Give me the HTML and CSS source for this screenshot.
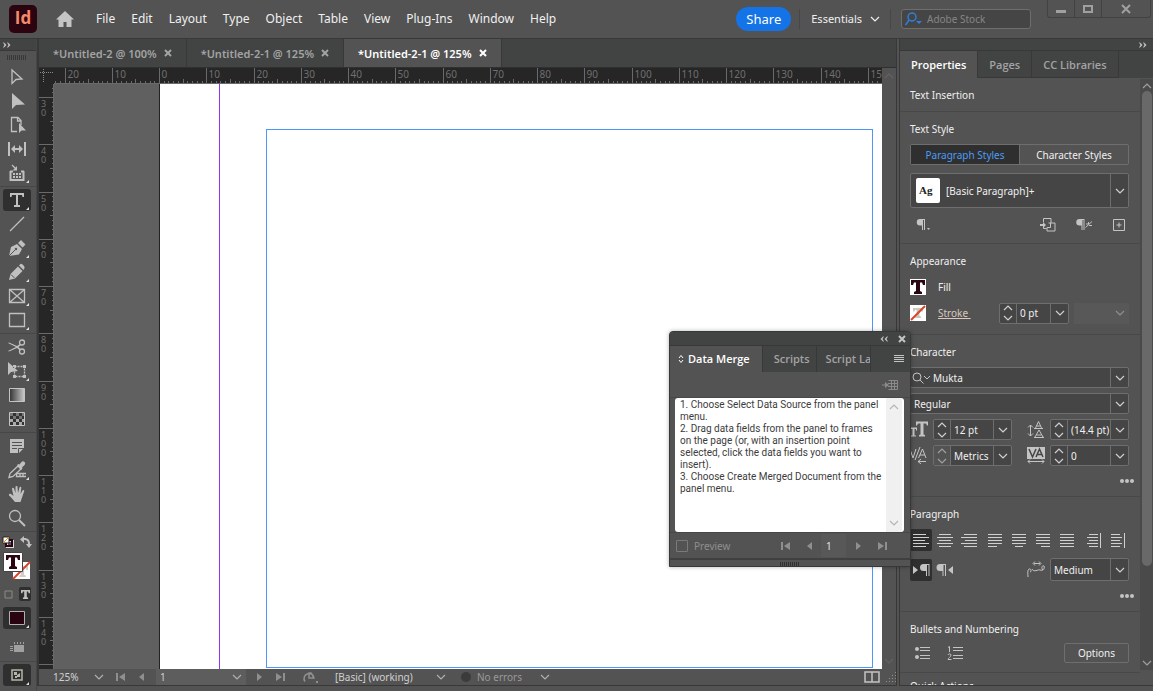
FILE: index.html
```html
<!DOCTYPE html>
<html lang="en">
<head>
    <meta charset="UTF-8">
    <meta name="viewport" content="width=device-width, initial-scale=1.0">
    <title>Untitled-2-1</title>
    <link rel="stylesheet" href="styles.css">
</head>
<body>
    <!-- shared icons -->
    <svg class="defs" aria-hidden="true">
        <symbol id="chev" viewBox="0 0 10 10"><path d="M1 3l4 4 4-4" fill="none" stroke="currentColor" stroke-width="1.200"/></symbol>
        <symbol id="updown" viewBox="0 0 10 18"><path d="M1 6l4-4 4 4M1 12l4 4 4-4" fill="none" stroke="currentColor" stroke-width="1.200"/></symbol>
        <symbol id="cross" viewBox="0 0 8 8"><path d="M1 1l6 6M7 1l-6 6" stroke="currentColor" stroke-width="2"/></symbol>
        <symbol id="more" viewBox="0 0 14 4"><circle cx="2" cy="2" r="2"/><circle cx="7" cy="2" r="2"/><circle cx="12" cy="2" r="2"/></symbol>
        <symbol id="dbl" viewBox="0 0 8 6"><path d="M0 .5h1L3.500 3 1 5.500H0L1.500 3zM4 .5h1L7.500 3 5 5.500H4L5.500 3z"/></symbol>
        <symbol id="first" viewBox="0 0 9 8"><path d="M0 0h2v8H0zM9 0v8L3 4z"/></symbol>
        <symbol id="prev" viewBox="0 0 9 8"><path d="M7 0v8L2 4z"/></symbol>
        <symbol id="next" viewBox="0 0 9 8"><path d="M2 0v8l5-4z"/></symbol>
        <symbol id="last" viewBox="0 0 9 8"><path d="M7 0h2v8H7zM0 0v8l6-4z"/></symbol>
        <symbol id="serif-t" viewBox="0 0 14 14"><path d="M0 0h14v5h-2L11 2.500H9V11l2 1v2H3v-2l2-1V2.500H3L2 5H0z"/></symbol>
    </svg>

    <header class="menubar">
        <div class="logo">Id</div>
        <button class="home" aria-label="Home"><svg viewBox="0 0 18 16"><path d="M9 0l9 8.500h-2.500V16h-5v-5h-3v5h-5V8.500H0z"/></svg></button>
        <nav class="menu">
            <a href="#">File</a>
            <a href="#">Edit</a>
            <a href="#">Layout</a>
            <a href="#">Type</a>
            <a href="#">Object</a>
            <a href="#">Table</a>
            <a href="#">View</a>
            <a href="#">Plug-Ins</a>
            <a href="#">Window</a>
            <a href="#">Help</a>
        </nav>
        <button class="share">Share</button>
        <button class="workspace">Essentials <svg><use href="#chev"/></svg></button>
        <label class="stock">
            <svg viewBox="0 0 18 14"><circle cx="7" cy="5" r="4" fill="none" stroke="#2f7fe0" stroke-width="1.500"/><path d="M4 8l-3.500 5" stroke="#2f7fe0" stroke-width="1.500"/><path d="M11 9h6l-3 3z" fill="#2f7fe0"/></svg>
            <input type="text" placeholder="Adobe Stock" aria-label="Adobe Stock">
        </label>
        <div class="window-buttons">
            <button aria-label="Minimize"><svg viewBox="0 0 10 10"><path d="M0 6h10v3H0z"/></svg></button>
            <button aria-label="Maximize"><svg viewBox="0 0 10 10"><path d="M1 2h8v6H1z" fill="none" stroke="currentColor" stroke-width="2"/></svg></button>
            <button aria-label="Close" class="wide"><svg viewBox="0 0 10 10"><path d="M1 1l8 8M9 1l-8 8" stroke="currentColor" stroke-width="2"/></svg></button>
        </div>
    </header>

    <main class="workarea">
        <aside class="tools">
            <div class="dock-head left"><svg><use href="#dbl"/></svg></div>
            <div class="grip"></div>
            <div class="tool-group">
                <button class="tool" aria-label="Selection"><svg viewBox="0 0 18 18"><path d="M4 2v13.500l4-4 6-.5z" class="line"/></svg></button>
                <button class="tool" aria-label="Direct Selection"><svg viewBox="0 0 18 18"><path d="M4 1v16l4-4 9-.5z"/></svg></button>
                <button class="tool" aria-label="Page"><svg viewBox="0 0 18 18"><path d="M9 15.500H3.500v-14H10l3 3V9M9.500 1.500v3.500H13" class="line"/><path d="M11 7v10l2.500-2.500H18z"/></svg></button>
                <button class="tool" aria-label="Gap"><svg viewBox="0 0 18 18"><path d="M1 2v14M17 2v14M4 9h10" class="line thick"/><path d="M3 9l4-4v8zM15 9l-4-4v8z"/></svg></button>
                <button class="tool more" aria-label="Content Collector"><svg viewBox="0 0 18 18"><path d="M2.500 7v9h13V7M2 7.500h3M13 7.500h3" class="line thick"/><path d="M4 1l4 4" class="line"/><path d="M9 2v4.500H4.500zM5 9h2v2H5zM8 9h2v2H8zM11 9h2v2h-2zM5 12h2v2H5zM8 12h2v2H8zM11 12h2v2h-2z"/></svg></button>
            </div>
            <div class="tool-group">
                <button class="tool more on" aria-label="Type"><svg viewBox="-2 -2 18 18"><path d="M0 0h14v4h-1.500L12 2H8v10h2v2H4v-2h2V2H2l-.5 2H0z"/></svg></button>
                <button class="tool" aria-label="Line"><svg viewBox="0 0 18 18"><path d="M2 16L16 2" class="line"/></svg></button>
                <button class="tool more" aria-label="Pen"><svg viewBox="0 0 18 18"><path d="M1 17l2-9 6-3 5 5-3 5.500zM10 4l3-3 4.500 4.500-3 3z"/><path d="M1 17l6-6" stroke="#535353"/><circle cx="8" cy="10" r="1.200" fill="#535353"/></svg></button>
                <button class="tool more" aria-label="Pencil"><svg viewBox="0 0 18 18"><path d="M1 17l1.500-6L10 3.500 14.500 8 7 15.500zM11 2.500l1.500-1.500c1-1 5 3 4 4L15.500 7z"/><path d="M3 11.500l3.500 3.500" stroke="#535353"/></svg></button>
                <button class="tool more" aria-label="Rectangle Frame"><svg viewBox="0 0 18 18"><path d="M1.500 2.500h15v13h-15zl15 13M16.500 2.500l-15 13" class="line"/></svg></button>
                <button class="tool more" aria-label="Rectangle"><svg viewBox="0 0 18 18"><path d="M1.500 2.500h15v13h-15z" class="line"/></svg></button>
            </div>
            <div class="tool-group">
                <button class="tool" aria-label="Scissors"><svg viewBox="0 0 18 18"><circle cx="14" cy="4.500" r="2.500" class="line"/><circle cx="14" cy="13.500" r="2.500" class="line"/><path d="M12 6L9 8 1 4.500 0 5l8 4-8 4 1 .5L9 10l3 2.500 1-1L10.500 9 13 7z"/></svg></button>
                <button class="tool more" aria-label="Free Transform"><svg viewBox="0 0 18 18"><path d="M6.500 4.500h10v10h-10z" class="line" stroke-dasharray="2 1"/><path d="M0 0v13l3-3 7-1zM5 3h3v3H5zM15 3h3v3h-3zM15 13h3v3h-3zM5 13h3v3H5z"/></svg></button>
                <button class="tool" aria-label="Gradient"><svg viewBox="0 0 18 18"><linearGradient id="g"><stop stop-color="#333"/><stop offset="1" stop-color="#ccc"/></linearGradient><path d="M1.500 2.500h15v13h-15z" fill="url(#g)" stroke="#c4c4c4"/></svg></button>
                <button class="tool" aria-label="Gradient Feather"><svg viewBox="0 0 18 18"><path d="M1.500 2.500h15v13h-15z" fill="#333" stroke="#c4c4c4"/><path d="M2 3h3v3H2zM8 3h3v3H8zM14 3h2v3h-2zM5 6h3v3H5zM11 6h3v3h-3z" fill="#777"/><path d="M2 9h3v3H2zM8 9h3v3H8zM14 9h2v3h-2zM5 12h3v3H5zM11 12h3v3h-3z" fill="#aaa"/></svg></button>
            </div>
            <div class="tool-group">
                <button class="tool" aria-label="Note"><svg viewBox="0 0 18 18"><path d="M2 2h14v9l-5 5H2z"/><path d="M4 5.500h10M4 8.500h10M4 11.500h5M10.500 16v-4.500H16" fill="none" stroke="#535353"/></svg></button>
                <button class="tool more" aria-label="Color Theme"><svg viewBox="0 0 18 18"><path d="M1 16.500l1-4L10 5l3 3-8 7.500z" class="line"/><path d="M9 4l1.500-1 1 .5 2-2.500c2-2 5 1 3 3L14 6.500l.5 1-1.500 1.500z"/><path d="M8.500 12.500h10v3h-10zM12 12.500v3M15 12.500v3" class="line"/></svg></button>
                <button class="tool" aria-label="Hand"><svg viewBox="0 0 18 18"><path d="M7 17c-2-2-4-5-6-6.500-.5-1.500 1-2 2-1.500l2.500 2L4 4c0-1.500 1.500-1.500 2-.5L7.500 8V2c0-1.500 2-1.500 2 0l.5 6 1.500-5.500c.5-1.200 2-.8 1.800.5L12.500 9l2-3.500c.8-1 2-.5 1.700.7L13.500 14l-1 3z"/></svg></button>
                <button class="tool" aria-label="Zoom"><svg viewBox="0 0 18 18"><circle cx="7" cy="7" r="5.500" class="line"/><path d="M11 11l6 6" class="line thick"/></svg></button>
            </div>
            <div class="swatches">
                <div class="swap">
                    <svg viewBox="0 0 12 12"><path d="M5 5h6v6H5z" fill="none" stroke="#ddd" stroke-width="2"/><path d="M4 4h6v6H4z" fill="none" stroke="#2a0411" stroke-width="2"/><path d="M1 1h6v6H1z" fill="#fff" stroke="#222"/><path d="M1 7l6-6" stroke="#e8871e"/></svg>
                    <svg viewBox="0 0 12 12"><path d="M0 3.500L4 0v2c4 0 6 2 6 6h2l-3 4-3-4h2c0-3-1-4-4-4v3z"/></svg>
                </div>
                <svg class="fillstroke" viewBox="0 0 28 28">
                    <path d="M10 10h17v17H10z" fill="#fff"/>
                    <use href="#serif-t" x="14" y="14" width="11" height="11" fill="#cfcfc8"/>
                    <path d="M10 27l17-17" stroke="#d8442a" stroke-width="2"/>
                    <path d="M.5 .5h19v19H.5z" fill="#fff" stroke="#444"/>
                    <use href="#serif-t" x="3" y="3" width="14" height="14" fill="#2a0411"/>
                </svg>
                <div class="affects">
                    <button aria-label="Formatting affects container"><svg viewBox="0 0 9 9"><path d="M1 1h7v7H1z" fill="none" stroke="#8d8d80"/></svg></button>
                    <button class="on" aria-label="Formatting affects text"><svg viewBox="0 0 14 14"><use href="#serif-t"/></svg></button>
                </div>
                <button class="tool more on" aria-label="Apply Color"><svg viewBox="0 0 18 18"><path d="M1.500 2.500h15v13h-15z" fill="#2a0411" stroke="#b0b0b0"/></svg></button>
                <button class="tool view" aria-label="View Options"><svg viewBox="0 0 18 18"><path d="M6 7h10v7H6zM6 4h1v2H6zM9 4h1v2H9zM12 4h1v2h-1zM15 4h1v2h-1zM2 8h3v1H2zM2 10h3v1H2zM2 12h3v1H2z" fill="#a0a0a0"/></svg></button>
            </div>
            <div class="tool-group last">
                <button class="tool more on" aria-label="Screen Mode"><svg viewBox="0 0 18 18"><path d="M4 4h10v10H4z" fill="none" stroke="#b5b5a8" stroke-width="1.500"/><path d="M6 6h3v3H6zM9 9l3-2v4H9zM7 10h2v2H7z" fill="#b5b5a8"/></svg></button>
            </div>
        </aside>

        <section class="document">
            <div class="doc-tabs">
                <div class="doc-tab"><a href="#">*Untitled-2 @ 100%</a><button aria-label="Close tab"><svg><use href="#cross"/></svg></button></div>
                <div class="doc-tab"><a href="#">*Untitled-2-1 @ 125%</a><button aria-label="Close tab"><svg><use href="#cross"/></svg></button></div>
                <div class="doc-tab active"><a href="#">*Untitled-2-1 @ 125%</a><button aria-label="Close tab"><svg><use href="#cross"/></svg></button></div>
            </div>
            <div class="doc-grid">
                <svg class="corner" viewBox="0 0 15 16"><path d="M1 4.500h13M4.500 1v14" stroke="#8a8a8a" stroke-dasharray="1 1"/></svg>
                <svg class="ruler" id="ruler-x"></svg>
                <svg class="ruler" id="ruler-y"></svg>
                <div class="canvas">
                    <div class="pasteboard"></div>
                    <div class="guide"></div>
                    <div class="page"><div class="frame"></div></div>
                </div>
                <div class="doc-scroll"><svg class="up"><use href="#chev"/></svg><svg><use href="#chev"/></svg></div>
            </div>
            <footer class="status">
                <div class="status-field zoom"><select aria-label="Zoom level"><option>125%</option></select><svg><use href="#chev"/></svg></div>
                <button aria-label="First page"><svg><use href="#first"/></svg></button>
                <button aria-label="Previous page"><svg><use href="#prev"/></svg></button>
                <div class="status-field page-no"><select aria-label="Page"><option>1</option></select><svg><use href="#chev"/></svg></div>
                <button aria-label="Next page"><svg><use href="#next"/></svg></button>
                <button aria-label="Last page"><svg><use href="#last"/></svg></button>
                <button class="open" aria-label="Open"><svg viewBox="0 0 16 12"><path d="M3 10.500A5 5 0 1 1 12 8M7 2v5h4V4.500L9 2z" fill="none" stroke="currentColor" stroke-width="1.500"/><path d="M14 10h2v2h-2z"/></svg></button>
                <div class="status-field preset"><select aria-label="Preflight profile"><option>[Basic] (working)</option></select><svg><use href="#chev"/></svg></div>
                <i class="dot"></i>
                <div class="status-field errors"><select aria-label="Preflight"><option>No errors</option></select><svg><use href="#chev"/></svg></div>
                <button class="split" aria-label="Split view"><svg viewBox="0 0 16 12"><path d="M1 1h14v10H1zM8 1v10" fill="none" stroke="#c4c4c4" stroke-width="1.500"/></svg></button>
                <svg class="resize" viewBox="0 0 10 10"><path d="M9 0h1v1H9zM6 3h1v1H6zM9 3h1v1H9zM3 6h1v1H3zM6 6h1v1H6zM9 6h1v1H9zM0 9h1v1H0zM3 9h1v1H3zM6 9h1v1H6zM9 9h1v1H9z"/></svg>
            </footer>
        </section>

        <aside class="panel">
            <div class="dock-head right"><svg><use href="#dbl"/></svg></div>
            <div class="panel-tabs">
                <a href="#" class="active">Properties</a>
                <a href="#">Pages</a>
                <a href="#">CC Libraries</a>
            </div>
            <div class="panel-body">
                <div class="sections">
                    <section class="block">
                        <h2>Text Insertion</h2>
                    </section>
                    <section class="block">
                        <h2>Text Style</h2>
                        <div class="segmented"><button class="on">Paragraph Styles</button><button>Character Styles</button></div>
                        <div class="combo style-pick">
                            <span class="ag">Ag</span>
                            <select aria-label="Paragraph style"><option>[Basic Paragraph]+</option></select>
                            <span class="drop"><svg><use href="#chev"/></svg></span>
                        </div>
                        <div class="style-icons">
                            <button aria-label="Paragraph options"><svg viewBox="0 0 16 14"><path d="M4 1h5v11H8V2H7v10H6V7.500H4A3.200 3.200 0 014 1zM11 10h3l-1.500 2z"/></svg></button>
                            <span class="spacer"></span>
                            <button aria-label="Redefine style"><svg viewBox="0 0 16 14"><path d="M3.500 4V.5H11V5M3.500 9v1.500h3M8.500 5h6.500v8H7V9.500h3.500V5" class="line"/><path d="M0 6h3V4l3 3-3 3V8H0z"/></svg></button>
                            <button aria-label="Clear overrides"><svg viewBox="0 0 16 14"><path d="M3.500 1h5v11h-1V2h-1v10h-1V7.500h-2a3.200 3.200 0 010-6.500z"/><path d="M9.500 9.500L16 3.500M10 6h2.500M13 7.500h3M12.500 4v2" class="line"/></svg></button>
                            <button aria-label="Create style"><svg viewBox="0 0 14 14"><path d="M1.500 1.500h11v11h-11zM7 4.500v5M4.500 7h5" class="line"/></svg></button>
                        </div>
                    </section>
                    <section class="block appearance">
                        <h2>Appearance</h2>
                        <div class="row fill-row">
                            <svg class="chip" viewBox="0 0 16 16"><path d="M0 0h16v16H0z" fill="#fff"/><use href="#serif-t" x="1" y="1" width="14" height="14" fill="#2a0411"/></svg>
                            <span class="name">Fill</span>
                        </div>
                        <div class="row stroke-row">
                            <svg class="chip" viewBox="0 0 16 16"><path d="M0 0h16v16H0z" fill="#fff"/><use href="#serif-t" x="3" y="3" width="10" height="10" fill="#c5c8bd"/><path d="M1 15L15 1" stroke="#d8442a" stroke-width="2"/></svg>
                            <label class="name" for="stroke"><a href="#">Stroke&nbsp;</a></label>
                            <div class="combo stroke-size">
                                <button class="step" aria-label="Step"><svg><use href="#updown"/></svg></button>
                                <input type="text" id="stroke" value="0 pt">
                                <button class="drop" aria-label="List"><svg><use href="#chev"/></svg></button>
                            </div>
                            <div class="stroke-type"><svg><use href="#chev"/></svg></div>
                        </div>
                    </section>
                    <section class="block">
                        <h2>Character</h2>
                        <div class="combo font">
                            <svg class="find" viewBox="0 0 18 12"><circle cx="5" cy="5" r="4" class="line"/><path d="M8 8l3.500 3.500M12 4l3 3 3-3" class="line"/></svg>
                            <input type="text" value="Mukta" aria-label="Font">
                            <button class="drop" aria-label="List"><svg><use href="#chev"/></svg></button>
                        </div>
                        <div class="combo">
                            <select aria-label="Font style"><option>Regular</option></select>
                            <span class="drop"><svg><use href="#chev"/></svg></span>
                        </div>
                        <div class="char-grid">
                            <svg class="glyph" viewBox="0 0 18 16"><path d="M6 0h12v4h-1l-1-2h-2.500v11l1.500.5V15H9v-1.500l1.500-.5V2H8L7 4H6zM0 6h7v3H6V7.500H4.500V14H6v1H1v-1h1.500V7.500H1V9H0z"/></svg>
                            <div class="combo">
                                <button class="step" aria-label="Step"><svg><use href="#updown"/></svg></button>
                                <input type="text" value="12 pt" aria-label="Font size">
                                <button class="drop" aria-label="List"><svg><use href="#chev"/></svg></button>
                            </div>
                            <svg class="glyph" viewBox="0 0 18 17"><path d="M3.500 4v11M1 6.500L3.500 4 6 6.500M1 12.500L3.500 15 6 12.500M7 16.500h10M7 7.500h9" class="line"/><path d="M8.500 7l3-6.500L14.500 7M9.500 5h4M8 16l4-7 4 7M9.500 14h5" class="line"/></svg>
                            <div class="combo">
                                <button class="step" aria-label="Step"><svg><use href="#updown"/></svg></button>
                                <input type="text" value="(14.4 pt)" aria-label="Leading">
                                <button class="drop" aria-label="List"><svg><use href="#chev"/></svg></button>
                            </div>
                            <svg class="glyph" viewBox="0 0 18 17"><path d="M0 2l3 9 3-9M10 0L5 13M8.500 11l4-9L16 11M10 8h5M8 14.500h8M11 12l-3 2.500 3 2.500" class="line"/></svg>
                            <div class="combo dim">
                                <button class="step" aria-label="Step"><svg><use href="#updown"/></svg></button>
                                <input type="text" value="Metrics" aria-label="Kerning">
                                <button class="drop" aria-label="List"><svg><use href="#chev"/></svg></button>
                            </div>
                            <svg class="glyph" viewBox="0 0 18 17"><path d="M0 0h18v12H0z"/><path d="M2 2l3.500 8L9 2M9 10l3.500-8L16 10M10 7.500h5" fill="none" stroke="#444" stroke-width="1.500"/><path d="M1 14.500h16M3 12.500l-2 2 2 2M15 12.500l2 2-2 2" class="line"/></svg>
                            <div class="combo">
                                <button class="step" aria-label="Step"><svg><use href="#updown"/></svg></button>
                                <input type="text" value="0" aria-label="Tracking">
                                <button class="drop" aria-label="List"><svg><use href="#chev"/></svg></button>
                            </div>
                        </div>
                        <button class="more-btn" aria-label="More character options"><svg><use href="#more"/></svg></button>
                    </section>
                    <section class="block">
                        <h2>Paragraph</h2>
                        <div class="aligns">
                            <button class="on" aria-label="Left"><svg viewBox="0 0 16 16"><path d="M0 2.500h13M0 5.500h16M0 8.500h12M0 11.500h16M0 14.500h13" class="line"/></svg></button>
                            <button aria-label="Center"><svg viewBox="0 0 16 16"><path d="M2 2.500h12M0 5.500h16M2 8.500h12M0 11.500h16M2 14.500h12" class="line"/></svg></button>
                            <button aria-label="Right"><svg viewBox="0 0 16 16"><path d="M3 2.500h13M0 5.500h16M4 8.500h12M0 11.500h16M3 14.500h13" class="line"/></svg></button>
                            <button aria-label="Justify left"><svg viewBox="0 0 16 16"><path d="M1 2.500h14M1 5.500h14M1 8.500h14M1 11.500h14M1 14.500h9" class="line"/></svg></button>
                            <button aria-label="Justify center"><svg viewBox="0 0 16 16"><path d="M1 2.500h14M1 5.500h14M1 8.500h14M1 11.500h14M4 14.500h8" class="line"/></svg></button>
                            <button aria-label="Justify right"><svg viewBox="0 0 16 16"><path d="M1 2.500h14M1 5.500h14M1 8.500h14M1 11.500h14M6 14.500h9" class="line"/></svg></button>
                            <button aria-label="Justify all"><svg viewBox="0 0 16 16"><path d="M1 2.500h14M1 5.500h14M1 8.500h14M1 11.500h14M1 14.500h14" class="line"/></svg></button>
                            <button aria-label="Towards spine"><svg viewBox="0 0 16 16"><path d="M4 2.500h9M2 5.500h11M4 8.500h9M2 11.500h11M4 14.500h9M15.500 1v15" class="line"/></svg></button>
                            <button aria-label="Away from spine"><svg viewBox="0 0 16 16"><path d="M2 2.500h9M2 5.500h11M2 8.500h9M2 11.500h11M2 14.500h9M15.500 1v15" class="line"/></svg></button>
                        </div>
                        <div class="row direction">
                            <button class="on" aria-label="Left to right"><svg viewBox="0 0 18 14"><path d="M1 3v8l5-4zM11.500 1h6v12h-1V2H15v11h-1V8h-2.500a3.500 3.500 0 010-7z"/></svg></button>
                            <button aria-label="Right to left"><svg viewBox="0 0 18 14"><path d="M4 1h6v12H9V2H7.500v11h-1V8H4a3.500 3.500 0 010-7zM17 3v8l-5-4z"/></svg></button>
                            <svg class="kashida" viewBox="0 0 18 17"><path d="M1 16c0-3-1-6 1-8 2-1 3 3 1 3M5 8c2 4 6 0 8 1 3 1 5-1 4-4-2-1-3 2-1 4M7 2.500h6M8 .5l-2 2 2 2M12 .5l2 2-2 2" class="line"/></svg>
                            <div class="combo">
                                <select aria-label="Kashida width"><option>Medium</option></select>
                                <span class="drop"><svg><use href="#chev"/></svg></span>
                            </div>
                        </div>
                        <button class="more-btn" aria-label="More paragraph options"><svg><use href="#more"/></svg></button>
                    </section>
                    <section class="block">
                        <h2>Bullets and Numbering</h2>
                        <div class="row lists">
                            <button aria-label="Bulleted list"><svg viewBox="0 0 16 14"><path d="M5 1.500h10M5 4.500h10M5 9.500h10M5 12.500h10" class="line"/><circle cx="2" cy="3" r="2"/><circle cx="2" cy="11" r="2"/></svg></button>
                            <button aria-label="Numbered list"><svg viewBox="0 0 16 14"><path d="M6 1.500h10M6 4.500h10M6 9.500h10M6 12.500h10M1 1.500l1.500-1V6M1 9c0-1.500 3-1.500 3 0 0 2-3 3-3 4.500h3.500" class="line"/></svg></button>
                            <button class="options">Options</button>
                        </div>
                    </section>
                    <section class="block quick">
                        <h2>Quick Actions</h2>
                    </section>
                </div>
                <div class="scrollbar">
                    <svg class="up"><use href="#chev"/></svg>
                    <div class="thumb"></div>
                    <svg><use href="#chev"/></svg>
                </div>
            </div>
        </aside>
    </main>

    <!-- floating panel, lies over the page -->
    <div class="float">
        <div class="float-head">
            <svg class="flip"><use href="#dbl"/></svg>
            <svg><use href="#cross"/></svg>
        </div>
        <div class="float-tabs">
            <a href="#" class="active"><svg viewBox="0 0 6 10"><path d="M1 4l2-2.500L5 4M1 6l2 2.500L5 6" class="line"/></svg>Data Merge</a>
            <a href="#">Scripts</a>
            <a href="#" class="cut">Script Label</a>
            <button aria-label="Panel menu"><svg viewBox="0 0 10 8"><path d="M0 .5h10M0 2.500h10M0 4.500h10M0 6.500h10" class="line"/></svg></button>
        </div>
        <div class="float-tools"><svg viewBox="0 0 16 12"><path d="M6.500 1.500h9v9h-9M9.500 1v9M12.500 1v9M6 4.500h9M6 7.500h9M0 6h5" class="line"/><path d="M3 3l4 3-4 3z"/></svg></div>
        <div class="float-list">
            <p>1. Choose Select Data Source from the panel menu.<br>
            2. Drag data fields from the panel to frames on the page (or, with an insertion point selected, click the data fields you want to insert).<br>
            3. Choose Create Merged Document from the panel menu.</p>
            <div class="list-scroll"><svg class="up"><use href="#chev"/></svg><svg><use href="#chev"/></svg></div>
        </div>
        <div class="float-foot">
            <label><input type="checkbox">Preview</label>
            <button aria-label="First record"><svg><use href="#first"/></svg></button>
            <button aria-label="Previous record"><svg><use href="#prev"/></svg></button>
            <input type="text" class="record" value="1" aria-label="Record">
            <button aria-label="Next record"><svg><use href="#next"/></svg></button>
            <button aria-label="Last record"><svg><use href="#last"/></svg></button>
        </div>
        <div class="float-grip"><i></i></div>
    </div>

    <script src="rulers.js"></script>
</body>
</html>
```

FILE: styles.css
```css
* {
    box-sizing: border-box;
}
body {
    margin: 0;
    height: 100vh;
    display: flex;
    flex-direction: column;
    overflow: hidden;
    position: relative;
    background: #535353;
    color: #f0f0f0;
    font: 10px/16px "Noto Sans", sans-serif;
}
a {
    color: inherit;
    text-decoration: none;
}
button, input, select {
    font: inherit;
    color: inherit;
    background: none;
    border: 0;
    padding: 0;
    margin: 0;
    min-width: 0;
    border-radius: 0;
    outline: 0;
}
select {
    appearance: none;
}
button {
    display: flex;
    align-items: center;
    justify-content: center;
}
svg {
    display: block;
    width: 10px;
    height: 10px;
    fill: currentColor;
    flex: none;
}
.defs {
    position: absolute;
    width: 0;
    height: 0;
}
.line {
    fill: none;
    stroke: currentColor;
    stroke-width: 1;
}
.up {
    transform: rotate(180deg);
}

/* menu bar */
.menubar {
    display: flex;
    align-items: center;
    height: 38px;
    padding-left: 9px;
    flex: none;
}
.logo {
    width: 28px;
    height: 28px;
    border-radius: 5px;
    background: #2b0410;
    color: #f58a6c;
    font: bold 17px/26px "Open Sans", sans-serif;
    text-align: center;
}
.home {
    margin: 0 22px 0 19px;
    color: #c4c4c4;
}
.home svg {
    width: 18px;
    height: 16px;
}
.menu {
    display: flex;
    gap: 16px;
    flex: 1;
    font-size: 12px;
}
.share {
    height: 24px;
    padding: 0 10px;
    border-radius: 12px;
    background: #1473e6;
    color: #fff;
    font-size: 13px;
}
.workspace {
    gap: 8px;
    margin-left: 8px;
    padding: 0 10px 0 11px;
    height: 20px;
    border: solid #474747;
    border-width: 0 1px;
    font-size: 11px;
}
.stock {
    display: flex;
    align-items: center;
    gap: 4px;
    width: 130px;
    height: 20px;
    margin: 0 16px 0 10px;
    padding: 0 3px;
    border: 1px solid #6e6e6e;
    border-radius: 3px;
    background: #454545;
}
.stock svg {
    width: 18px;
    height: 14px;
}
.stock input {
    flex: 1;
}
.stock input::placeholder {
    color: #858585;
}
.window-buttons {
    display: flex;
    align-self: flex-start;
    height: 18px;
    margin-right: 2px;
    border: 1px solid #424242;
    border-top: 0;
    border-radius: 0 0 3px 3px;
    color: #a0a0a0;
}
.window-buttons button {
    width: 27px;
    border-right: 1px solid #424242;
}
.window-buttons .wide {
    width: 48px;
    border-right: 0;
}

/* work area */
.workarea {
    display: flex;
    flex: 1;
    min-height: 0;
    border-top: 1px solid #383838;
}
.dock-head {
    display: flex;
    align-items: center;
    height: 12px;
    padding: 0 3px;
    background: #424443;
    border-bottom: 1px solid #383838;
    color: #c4c4c4;
    flex: none;
}
.dock-head svg {
    width: 8px;
    height: 6px;
}
.dock-head.right {
    justify-content: flex-end;
    padding-right: 6px;
}

/* tools */
.tools {
    width: 37px;
    flex: none;
    color: #c0c0c0;
    border-right: 1px solid #474747;
}
.tools .line {
    stroke-width: 1.3;
}
.tools .thick {
    stroke-width: 2;
}
.grip {
    width: 20px;
    height: 5px;
    margin: 4px 7px 6px;
    background: repeating-linear-gradient(90deg, #383838 0 1px, #535353 1px 2px);
}
.tool-group, .swatches {
    padding-bottom: 1px;
    border-bottom: 1px solid #474747;
    margin-bottom: 2px;
}
.tool {
    position: relative;
    width: 28px;
    height: 22px;
    margin: 1px 0 1px 3px;
    border-radius: 3px;
}
.tool-group .tool + .tool {
    margin-top: 2px;
}
.tool svg {
    width: 18px;
    height: 18px;
}
.tool.more::after {
    content: "";
    position: absolute;
    right: 2px;
    bottom: 1px;
    border: solid transparent;
    border-width: 3px 0 0 3px;
    border-right: 3px solid #e0e0e0;
    border-left: 0;
}
.on {
    background: #302f30;
}
.swap {
    display: flex;
    gap: 6px;
    padding: 2px 2px 4px;
}
.swap svg {
    width: 12px;
    height: 12px;
}
.fillstroke {
    width: 28px;
    height: 28px;
    margin-left: 3px;
}
.affects {
    display: flex;
    align-items: center;
    gap: 7px;
    padding: 7px 5px 5px;
}
.affects .on {
    width: 14px;
    height: 14px;
    border-radius: 2px;
}
.affects svg {
    width: 9px;
    height: 9px;
}
.tool.view {
    margin: 7px 3px 2px;
}
.last {
    border: 0;
}

/* document window */
.document {
    display: flex;
    flex-direction: column;
    flex: 1;
    min-width: 0;
    margin: 0 2px 5px 0;
    border: solid #383838;
    border-width: 0 1px 1px 2px;
}
.doc-tabs {
    display: flex;
    height: 29px;
    background: #424443;
    border-bottom: 1px solid #303030;
    font: 600 11px/29px "Noto Sans", sans-serif;
    color: #a3a3a3;
    flex: none;
}
.doc-tab {
    display: flex;
    gap: 7px;
    padding: 0 14px;
    border-right: 1px solid #383838;
}
.doc-tab.active {
    background: #535353;
    color: #fff;
}
.doc-tab svg {
    width: 8px;
    height: 8px;
}
.doc-grid {
    display: grid;
    grid-template: 16px 1fr / 15px 1fr 14px;
    flex: 1;
    min-height: 0;
}
.corner {
    width: 15px;
    height: 16px;
    background: #262626;
}
.ruler {
    width: 100%;
    height: 100%;
    background: #262626;
    border-bottom: 1px solid #6a6a6a;
    font-size: 10px;
    fill: #6f6f6f;
    overflow: hidden;
}
#ruler-y {
    grid-area: 2 / 1;
    border: 0;
    border-right: 1px solid #6a6a6a;
    font-size: 9px;
}
.ruler path {
    stroke: #6a6a6a;
}
.canvas {
    grid-area: 2 / 2;
    display: flex;
    background: #fff;
}
.pasteboard {
    width: 106px;
    background: #606060;
    border-right: 1px solid #222;
}
.guide {
    width: 60px;
    border-right: 1px solid #8f35f5;
}
.page {
    display: flex;
    flex: 1;
    padding: 45px 9px 1px 46px;
}
.frame {
    flex: 1;
    border: 1px solid #4f97f7;
}
.doc-scroll {
    grid-area: 1 / 3 / 3 / 4;
    display: flex;
    flex-direction: column;
    justify-content: space-between;
    padding: 3px 2px;
    color: #636363;
}
.status {
    display: flex;
    align-items: center;
    height: 16px;
    padding-left: 14px;
    color: #8f8f8f;
    flex: none;
}
.status button {
    width: 21px;
}
.status button svg {
    width: 9px;
    height: 8px;
}
.status-field {
    display: flex;
    align-items: center;
    color: #d0d0d0;
}
.status-field select {
    flex: 1;
}
.status-field svg {
    color: #b0b0b0;
}
.zoom {
    width: 51px;
    margin-right: 6px;
}
.page-no {
    width: 90px;
    height: 16px;
    margin: 0 3px 0 4px;
    padding: 0 4px;
    background: #5d5d5d;
}
.status .open {
    width: 16px;
    margin: 0 17px 0 11px;
}
.status .open svg, .status .split svg {
    width: 16px;
    height: 12px;
}
.preset {
    width: 111px;
}
.dot {
    width: 10px;
    height: 10px;
    margin: 0 6px 0 15px;
    border-radius: 5px;
    background: #3b3b3b;
}
.errors {
    width: 73px;
    color: #9a9a9a;
}
.status .split {
    margin-left: auto;
    width: 16px;
}
.resize {
    margin: 0 0 0 6px;
}

/* properties panel */
.panel {
    display: flex;
    flex-direction: column;
    width: 254px;
    flex: none;
    margin-bottom: 5px;
    border: solid #383838;
    border-width: 0 0 1px 1px;
}
.panel-tabs {
    display: flex;
    height: 27px;
    background: #424443;
    color: #a3a3a3;
    font: 600 11px/27px "Open Sans", sans-serif;
    flex: none;
}
.panel-tabs a {
    padding: 0 11px;
    border: solid #383838;
    border-width: 0 1px 1px 0;
}
.panel-tabs .active {
    background: #535353;
    border-bottom: 0;
    color: #fff;
}
.panel-body {
    display: flex;
    flex: 1;
    min-height: 0;
}
.sections {
    flex: 1;
    overflow: hidden;
}
.block {
    padding: 9px 11px 8px 10px;
    border-bottom: 1px solid #484848;
}
h2 {
    margin: 0;
    font: inherit;
}
.segmented {
    display: flex;
    height: 21px;
    margin-top: 7px;
    border: 1px solid #6e6e6e;
    border-radius: 2px;
}
.segmented button {
    flex: 1;
}
.segmented .on {
    color: #4b9cf5;
    border-right: 1px solid #6e6e6e;
}
.combo {
    display: flex;
    align-items: stretch;
    height: 21px;
    border: 1px solid #6e6e6e;
    border-radius: 2px;
    background: #454545;
}
.combo input, .combo select {
    flex: 1;
    width: 0;
    padding-left: 3px;
}
.drop, .step {
    display: flex;
    align-items: center;
    justify-content: center;
    width: 18px;
    flex: none;
    border-left: 1px solid #6e6e6e;
    color: #d0d0d0;
}
.step {
    width: 17px;
    border-left: 0;
    border-right: 1px solid #6e6e6e;
}
.step svg {
    height: 18px;
}
.dim .step {
    background: #535353;
    color: #a0a0a0;
}
.style-pick {
    height: 35px;
    margin: 8px 0;
}
.ag {
    width: 24px;
    margin: 4px 3px 4px 5px;
    border-radius: 2px;
    background: #fff;
    color: #222;
    font: bold 11px/25px "Liberation Serif", serif;
    padding-left: 3px;
}
.style-icons {
    display: flex;
    height: 18px;
    gap: 20px;
    margin-bottom: 1px;
    padding: 0 3px 0 6px;
    color: #c4c4c4;
}
.style-icons svg {
    width: 16px;
    height: 14px;
}
.style-icons button:last-child svg {
    width: 14px;
}
.spacer {
    flex: 1;
}
.row {
    display: flex;
    align-items: center;
}
.chip {
    width: 16px;
    height: 16px;
}
.name {
    margin-left: 12px;
}
.name a {
    color: #d8c8be;
    text-decoration: underline;
}
.appearance {
    padding-bottom: 10px;
}
.fill-row {
    margin-top: 7px;
    height: 21px;
}
.stroke-row {
    margin-top: 5px;
    height: 22px;
}
.stroke-size {
    width: 70px;
    margin-left: auto;
}
.stroke-type {
    display: flex;
    align-items: center;
    justify-content: flex-end;
    width: 55px;
    height: 21px;
    margin-left: 5px;
    padding-right: 4px;
    background: #585858;
    color: #8f8f8f;
}
.font {
    margin: 7px 0 5px;
}
.find {
    width: 18px;
    height: 12px;
    margin: 4px 0 0 1px;
    color: #c4c4c4;
}
.char-grid {
    display: grid;
    grid-template-columns: 23px 1fr 38px 79px;
    gap: 5px 0;
    margin-top: 5px;
}
.glyph {
    width: 18px;
    height: 17px;
    align-self: center;
    color: #c4c4c4;
}
.glyph:nth-child(4n+3) {
    margin-left: 15px;
}
.more-btn {
    height: 15px;
    margin: 7px -5px 0 auto;
    color: #c4c4c4;
}
.more-btn svg {
    width: 14px;
    height: 4px;
}
.aligns {
    display: flex;
    gap: 2px;
    margin-top: 7px;
    color: #d0d0d0;
}
.aligns button, .direction button {
    width: 22px;
    height: 22px;
    border-radius: 2px;
}
.aligns button:nth-child(4), .aligns button:nth-child(8) {
    margin-left: 2px;
}
.aligns svg {
    width: 16px;
    height: 16px;
}
.direction {
    margin-top: 7px;
    gap: 2px;
    color: #c4c4c4;
}
.direction button svg, .kashida {
    width: 18px;
    height: 14px;
}
.direction .kashida {
    height: 17px;
    margin: 0 3px 0 auto;
}
.direction .combo {
    width: 79px;
    height: 23px;
    color: #f0f0f0;
}
.lists {
    gap: 16px;
    margin: 6px 0 1px 5px;
    color: #c4c4c4;
}
.lists svg {
    width: 16px;
    height: 14px;
}
.options {
    width: 65px;
    height: 20px;
    margin-left: auto;
    border: 1px solid #6e6e6e;
    border-radius: 2px;
    color: #f0f0f0;
}
.quick {
    padding-top: 5px;
}
.scrollbar {
    display: flex;
    flex-direction: column;
    align-items: center;
    width: 13px;
    padding: 2px 1px 0;
    margin: 1px 0 15px;
    background: #4a4a4a;
    color: #a0a0a0;
}
.scrollbar .thumb {
    width: 10px;
    flex: 0 1 475px;
    border-radius: 5px;
    background: #696969;
}
.scrollbar svg:last-child {
    margin: auto 0 2px;
}

/* data merge panel */
.float {
    position: absolute;
    top: 331px;
    right: 242px;
    width: 242px;
    border: 1px solid #383838;
    border-radius: 4px 4px 0 0;
    background: #535353;
    box-shadow: 0 0 4px rgba(0, 0, 0, 0.3);
}
.float-head {
    display: flex;
    align-items: center;
    justify-content: flex-end;
    gap: 10px;
    height: 14px;
    padding-right: 4px;
    background: #424443;
    border-bottom: 1px solid #383838;
    border-radius: 4px 4px 0 0;
    color: #c4c4c4;
}
.float-head svg {
    width: 8px;
    height: 8px;
}
.float-head .flip {
    height: 6px;
    transform: rotate(180deg);
}
.float-tabs {
    display: flex;
    height: 26px;
    background: #424443;
    color: #a3a3a3;
    font: 600 11px/26px "Open Sans", sans-serif;
}
.float-tabs a {
    display: flex;
    align-items: center;
    padding: 0 6px 0 11px;
    border-right: 1px solid #383838;
    white-space: nowrap;
}
.float-tabs .active {
    gap: 4px;
    padding: 0 12px 0 8px;
    background: #535353;
    color: #fff;
}
.float-tabs .active svg {
    width: 6px;
}
.float-tabs .cut {
    flex: 1;
    padding: 0 0 0 9px;
    overflow: hidden;
}
.float-tabs button {
    width: 39px;
    padding-left: 16px;
    color: #c4c4c4;
}
.float-tools {
    display: flex;
    justify-content: flex-end;
    align-items: center;
    height: 26px;
    padding-right: 12px;
    border-bottom: 1px solid #474747;
    color: #8a8a8a;
}
.float-tools svg {
    width: 16px;
    height: 12px;
}
.float-list {
    display: flex;
    height: 134px;
    margin: 0 6px 0 5px;
    border-radius: 3px;
    background: #fff;
    color: #3c3c3c;
    font-family: Roboto, sans-serif;
    line-height: 12px;
    overflow: hidden;
}
.float-list p {
    flex: 1;
    margin: 0;
    padding: 1px 0 0 5px;
}
.list-scroll {
    display: flex;
    flex-direction: column;
    justify-content: space-between;
    width: 16px;
    margin-right: 2px;
    padding: 4px 3px;
    background: #f0f0f0;
    color: #b5b5b5;
}
.float-foot {
    display: flex;
    align-items: center;
    height: 26px;
    padding: 0 16px 0 6px;
    border-top: 1px solid #474747;
    color: #8f8f8f;
}
.float-foot label {
    display: flex;
    align-items: center;
    gap: 6px;
    margin-right: auto;
}
.float-foot input[type="checkbox"] {
    appearance: none;
    width: 12px;
    height: 12px;
    border: 1px solid #7a7a7a;
    border-radius: 1px;
}
.float-foot button {
    width: 24px;
}
.float-foot svg {
    width: 9px;
    height: 8px;
}
.float-foot .record {
    width: 25px;
    height: 23px;
    padding-left: 5px;
    background: #585858;
    color: #e0e0e0;
}
.float-grip {
    height: 8px;
    padding: 2px 0;
    border-top: 2px solid #404040;
}
.float-grip i {
    display: block;
    width: 20px;
    height: 4px;
    margin: 0 auto;
    background: repeating-linear-gradient(90deg, #303030 0 1px, #535353 1px 2px);
}
```

FILE: rulers.js
```js
// Draws the two document rulers, in millimetres at 125%.
const NS = "http://www.w3.org/2000/svg";
const STEP = 47.25; // pixels for 10 mm
const ORIGIN_X = 106; // where 0 falls on the horizontal ruler
const ORIGIN_Y = 13; // where 30 falls on the vertical ruler

function add(parent, name, attrs, text) {
    const el = document.createElementNS(NS, name);
    for (const key in attrs) el.setAttribute(key, attrs[key]);
    if (text !== undefined) el.textContent = text;
    parent.appendChild(el);
}

function drawRulers() {
    const rx = document.getElementById("ruler-x");
    const ry = document.getElementById("ruler-y");
    let d = "";
    for (let i = -22; i * STEP / 10 + ORIGIN_X < rx.clientWidth; i++) {
        const x = Math.round(ORIGIN_X + i * STEP / 10) - 0.5;
        const len = i % 10 === 0 ? 16 : i % 5 === 0 ? 4 : 2;
        d += `M${x} ${15 - len}v${len}`;
        if (i % 10 === 0) add(rx, "text", { x: x + 2, y: 10 }, Math.abs(i));
    }
    add(rx, "path", { d });

    d = "";
    for (let i = -2; i * STEP / 10 + ORIGIN_Y < ry.clientHeight; i++) {
        const y = Math.round(ORIGIN_Y + i * STEP / 10) + 0.5;
        const len = i % 10 === 0 ? 15 : i % 5 === 0 ? 4 : 2;
        d += `M${15 - len} ${y}h${len}`;
        // digits are stacked; the last mark has no room for them
        if (i % 10 === 0 && y + 9 < ry.clientHeight) {
            String(30 + i).split("").forEach((c, n) => add(ry, "text", { x: 2, y: y + 9 + n * 9 }, c));
        }
    }
    add(ry, "path", { d });
}

drawRulers();
```
